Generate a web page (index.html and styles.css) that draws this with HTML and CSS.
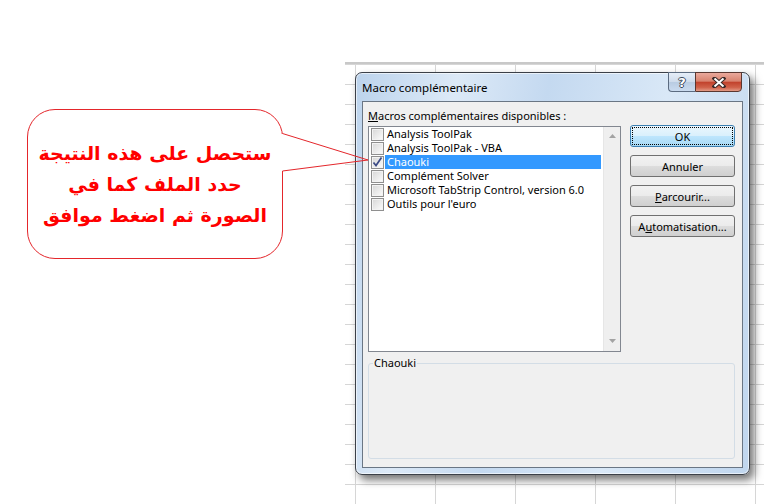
FILE: index.html
```html
<!DOCTYPE html>
<html lang="fr">
<head>
    <meta charset="UTF-8">
    <meta name="viewport" content="width=device-width, initial-scale=1.0">
    <title>Macro complémentaire</title>
    <link rel="stylesheet" href="styles.css">
</head>
<body>
    <div class="page">
        <div class="note">
            <div class="callout">
                <p lang="ar">ستحصل على هذه النتيجة<br>حدد الملف كما في<br>الصورة ثم اضغط موافق</p>
                <svg class="tail" width="92" height="46" viewBox="0 0 92 46">
                    <rect x="0" y="4" width="3" height="37" fill="#fff"/>
                    <path d="M1.5 3.5 L87 30 L1.5 41" fill="none" stroke="#e4262b" stroke-width="1"/>
                </svg>
            </div>
        </div>

        <div class="sheet">
            <div class="dialog">
                <div class="titlebar">
                    <span class="title">Macro complémentaire</span>
                    <div class="caption-btns">
                        <div class="cap-help"><span>?</span></div>
                        <div class="cap-close">
                            <svg width="14" height="11" viewBox="0 0 14 11">
                                <path d="M2.5 1.5 L11.5 9.5 M11.5 1.5 L2.5 9.5" stroke="#3a2a28" stroke-width="4" stroke-linecap="square"/>
                                <path d="M2.5 1.5 L11.5 9.5 M11.5 1.5 L2.5 9.5" stroke="#fff" stroke-width="2"/>
                            </svg>
                        </div>
                    </div>
                </div>

                <div class="client">
                    <div class="avail"><u>M</u>acros complémentaires disponibles :</div>
                    <div class="main">
                        <div class="list">
                            <div class="items">
                                <div class="item"><span class="check"></span><span class="text">Analysis ToolPak</span></div>
                                <div class="item"><span class="check"></span><span class="text">Analysis ToolPak - VBA</span></div>
                                <div class="item sel">
                                    <span class="check">
                                        <svg width="11" height="11" viewBox="0 0 11 11"><path d="M1.5 5.5 L4 8.5 L9.5 0.5" fill="none" stroke="#3c4b86" stroke-width="1.7"/></svg>
                                    </span><span class="text">Chaouki</span>
                                </div>
                                <div class="item"><span class="check"></span><span class="text">Complément Solver</span></div>
                                <div class="item"><span class="check"></span><span class="text">Microsoft TabStrip Control, version 6.0</span></div>
                                <div class="item"><span class="check"></span><span class="text">Outils pour l'euro</span></div>
                            </div>
                            <div class="scroll">
                                <svg width="7" height="4" viewBox="0 0 7 4"><path d="M0 4 L3.5 0 L7 4 Z" fill="#a3a3a3"/></svg>
                                <svg width="7" height="4" viewBox="0 0 7 4"><path d="M0 0 L3.5 4 L7 0 Z" fill="#a3a3a3"/></svg>
                            </div>
                        </div>
                        <div class="actions">
                            <button class="btn default">OK</button>
                            <button class="btn">Annuler</button>
                            <button class="btn"><u>P</u>arcourir...</button>
                            <button class="btn">A<u>u</u>tomatisation...</button>
                        </div>
                    </div>
                    <fieldset class="group">
                        <legend>Chaouki</legend>
                    </fieldset>
                </div>
            </div>
        </div>
    </div>
</body>
</html>
```

FILE: styles.css
```css
* { box-sizing: border-box; }
body {
    margin: 0;
    background-color: #FFFFFF;
    font-family: "Noto Sans", "Open Sans", sans-serif;
    font-size: 11px;
    color: #000;
}
.page {
    display: flex;
    width: 764px;
    height: 504px;
    overflow: hidden;
}

/* callout on the left */
.note {
    width: 345px;
    flex: none;
    padding: 109px 0 0 27px;
    position: relative;
    z-index: 2;
}
.callout {
    position: relative;
    width: 256px;
    height: 150px;
    border: 1px solid #e4262b;
    border-radius: 28px;
    background-color: #fff;
    display: flex;
    align-items: center;
    justify-content: center;
}
.callout p {
    margin: 0;
    direction: rtl;
    text-align: center;
    font-family: "DejaVu Sans", sans-serif;
    font-weight: bold;
    font-size: 19px;
    line-height: 31px;
    color: #ff0000;
}
.tail {
    position: absolute;
    left: 253px;
    top: 20px;
    overflow: visible;
}

/* excel sheet behind */
.sheet {
    flex: 1;
    margin-top: 62px;
    border-top: 2px solid #c8c8c8;
    background-color: #fff;
    background-image:
        linear-gradient(to right, #d6d6d6 1px, transparent 1px),
        linear-gradient(to top, #d6d6d6 1px, transparent 1px);
    background-size: 80px 100%, 100% 20px;
    background-position: 10px 0, 0 1px;
    padding: 8px 0 0 10px;
}

/* dialog window */
.dialog {
    width: 395px;
    border: 1px solid #3b4048;
    border-radius: 7px;
    padding: 0 6px 6px;
    background: linear-gradient(100deg, #bcd3ec 0%, #dce9f7 22%, #c4d9f0 42%, #d9e8f7 68%, #c0d6ee 100%);
    box-shadow: inset 0 0 0 1px rgba(255,255,255,0.6), 4px 5px 8px rgba(0,0,0,0.55);
}
.titlebar {
    height: 28px;
    display: flex;
    align-items: center;
}
.title { flex: 1; font-size: 11.5px; }
.caption-btns {
    align-self: flex-start;
    margin-top: -1px;
    margin-right: 1px;
    display: flex;
}
.cap-help {
    width: 27px;
    height: 20px;
    border: 1px solid #5b6b80;
    border-right: none;
    border-radius: 0 0 0 4px;
    background: linear-gradient(#e6eef8, #cfdcec 48%, #b9cce2 52%, #cadbef);
    display: flex;
    align-items: center;
    justify-content: center;
}
.cap-help span {
    font-family: "DejaVu Sans", sans-serif;
    font-weight: bold;
    font-size: 13px;
    color: #fff;
    text-shadow: 1px 0 0 #3c4a5c, -1px 0 0 #3c4a5c, 0 1px 0 #3c4a5c, 0 -1px 0 #3c4a5c;
}
.cap-close {
    width: 47px;
    height: 20px;
    border: 1px solid #5a3730;
    border-radius: 0 0 4px 0;
    background: linear-gradient(#eaa99c, #d8836f 45%, #c2432d 52%, #d0624a 80%, #e29a86);
    display: flex;
    align-items: center;
    justify-content: center;
}
.client {
    border: 1px solid #6a7684;
    background-color: #f0f0f0;
    padding: 6px 7px 8px 5px;
}
.avail {
    line-height: 16px;
    margin-bottom: 2px;
}
.main {
    display: flex;
    gap: 9px;
}
.list {
    width: 253px;
    height: 226px;
    border: 1px solid #828790;
    background-color: #fff;
    display: flex;
}
.items {
    flex: 1;
    margin-right: 2px;
}
.item {
    display: flex;
    align-items: center;
    height: 14px;
    line-height: 14px;
    padding-left: 2px;
}
.check {
    width: 13px;
    height: 13px;
    flex: none;
    margin-right: 1px;
    border: 1px solid #8f8f8f;
    background: linear-gradient(135deg, #d6d6d6, #fdfdfd);
    box-shadow: inset 0 0 0 1px #f3f3f3;
    display: flex;
    align-items: center;
    justify-content: center;
}
.text {
    flex: 1;
    height: 14px;
    padding-left: 2px;
    white-space: nowrap;
}
.sel .text {
    background-color: #3399ff;
    color: #fff;
}
.scroll {
    width: 17px;
    flex: none;
    background-color: #efefef;
    border-left: 1px solid #e6e6e6;
    display: flex;
    flex-direction: column;
    justify-content: space-between;
    align-items: center;
    padding: 7px 0 8px;
}
.actions {
    width: 105px;
    display: flex;
    flex-direction: column;
    gap: 8px;
    margin-top: -1px;
}
.btn {
    height: 22px;
    padding: 0;
    border: 1px solid #707070;
    border-radius: 3px;
    background: linear-gradient(#f2f2f2, #ebebeb 50%, #dddddd 50%, #cfcfcf);
    font: inherit;
    color: #000;
}
.btn.default {
    border-color: #3c7fb1;
    background: linear-gradient(#eaf6fd, #d9f0fc 50%, #bee6fd 50%, #a7d9f5);
    outline: 1px dotted #000;
    outline-offset: -3px;
}
.group {
    margin: 3px 0 0;
    padding: 0;
    height: 104px;
    border: 1px solid #d3dde6;
    border-radius: 3px;
}
.group legend {
    margin-left: 4px;
    padding: 0 1px;
    line-height: 16px;
}
```
